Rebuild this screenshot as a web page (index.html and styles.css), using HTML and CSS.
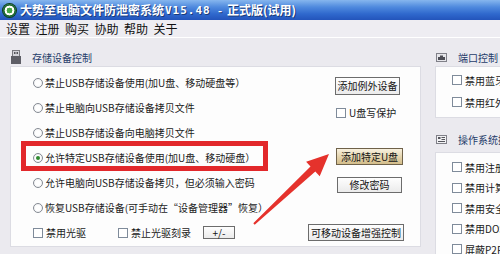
FILE: index.html
```html
<!DOCTYPE html>
<html lang="zh-CN">
<head>
<meta charset="utf-8">
<title>大势至电脑文件防泄密系统</title>
<link rel="stylesheet" href="styles.css">
</head>
<body>
<div class="window">
  <div class="titlebar">
    <span class="app-icon"></span>
    <span class="title"><span class="t-cn t-main">大势至电脑文件防泄密系统</span><span class="ver">V15.48</span><span class="t-dash">-</span><span class="t-cn t-ed">正式版(试用)</span></span>
  </div>
  <div class="menubar">
    <span>设置</span><span>注册</span><span>购买</span><span>协助</span><span>帮助</span><span>关于</span>
  </div>
  <div class="client">
    <section class="group main-group">
      <div class="group-head">
        <svg class="gicon" width="10" height="14" viewBox="0 0 10 14">
          <rect x="1.5" y="0.5" width="7" height="6" fill="#d4d4da" stroke="#7a7a80"/>
          <rect x="3" y="2" width="1.5" height="2" fill="#55555a"/>
          <rect x="5.5" y="2" width="1.5" height="2" fill="#55555a"/>
          <rect x="0" y="6" width="10" height="8" fill="#5e5e66"/>
        </svg>
        <span>存储设备控制</span>
      </div>
      <div class="group-box">
        <div class="opt-grid">
          <div class="radio"><i class="rb"></i>禁止USB存储设备使用(加U盘、移动硬盘等）</div>
          <div class="side"><button class="btn btn-exc">添加例外设备</button></div>

          <div class="radio"><i class="rb"></i>禁止电脑向USB存储设备拷贝文件</div>
          <div class="side"><div class="check wp"><i class="cb"></i>U盘写保护</div></div>

          <div class="radio"><i class="rb"></i>禁止USB存储设备向电脑拷贝文件</div>
          <div class="side"></div>

          <div class="radio"><i class="rb on"></i>允许特定USB存储设备使用(加U盘、移动硬盘）</div>
          <div class="side"><button class="btn btn-hot">添加特定U盘</button></div>

          <div class="radio"><i class="rb"></i>允许电脑向USB存储设备拷贝，但必须输入密码</div>
          <div class="side"><button class="btn btn-pwd">修改密码</button></div>

          <div class="radio"><i class="rb"></i>恢复USB存储设备(可手动在“设备管理器”恢复）</div>
          <div class="side"></div>
        </div>
        <div class="bottom-row">
          <div class="check c1"><i class="cb"></i>禁用光驱</div>
          <div class="check c2"><i class="cb"></i>禁止光驱刻录</div>
          <button class="btn btn-pm">+/-</button>
          <button class="btn btn-enh">可移动设备增强控制</button>
        </div>
      </div>
    </section>

    <aside class="right-col">
      <section class="group">
        <div class="group-head">
          <svg class="gicon" width="11" height="9" viewBox="0 0 11 9">
            <rect x="0.5" y="0.5" width="10" height="8" fill="#e6e6ea" stroke="#808088"/>
            <path d="M2 7 L2 4 L4 4 L4 2.5 L7 2.5 L7 4 L9 4 L9 7 Z" fill="#4d4d55"/>
          </svg>
          <span>端口控制</span>
        </div>
        <div class="group-box side-box port-box">
          <div class="check rrow"><i class="cb"></i>禁用蓝牙</div>
          <div class="check rrow"><i class="cb"></i>禁用红外</div>
        </div>
      </section>
      <section class="group os-group">
        <div class="group-head">
          <svg class="gicon" width="11" height="9" viewBox="0 0 11 9">
            <rect x="0.5" y="0.5" width="10" height="8" fill="#f2f2f4" stroke="#808088"/>
            <rect x="2" y="2" width="2.5" height="2" fill="#55555c"/>
            <rect x="5.5" y="2" width="3.5" height="1" fill="#55555c"/>
            <rect x="5.5" y="4" width="3.5" height="1" fill="#55555c"/>
            <rect x="2" y="6" width="7" height="1" fill="#55555c"/>
          </svg>
          <span>操作系统控制</span>
        </div>
        <div class="group-box side-box os-box">
          <div class="check rrow2"><i class="cb"></i>禁用注册表</div>
          <div class="check rrow2"><i class="cb"></i>禁用计算机</div>
          <div class="check rrow2"><i class="cb"></i>禁用安全模式</div>
          <div class="check rrow2"><i class="cb"></i>禁用DOS</div>
          <div class="check rrow2"><i class="cb"></i>屏蔽P2P</div>
        </div>
      </section>
    </aside>
  </div>

  <div class="annot-box"></div>
  <svg class="annot-arrow" width="500" height="254" viewBox="0 0 500 254">
    <polygon points="253.3,223.3 310.5,166.4 306.1,161.7 329,154 319.7,176.3 315.3,171.6 254.7,224.7" fill="#e5322c"/>
  </svg>
</div>
</body>
</html>
```

FILE: styles.css
```css
* {
  box-sizing: border-box;
  margin: 0;
  padding: 0;
}

html, body {
  width: 500px;
  height: 254px;
  overflow: hidden;
}

body {
  background: #ebeaef;
  font-family: "Noto Sans CJK SC", "Noto Sans", sans-serif;
  font-size: 10px;
  color: #1b1b1b;
}

.window {
  position: relative;
  width: 500px;
  height: 254px;
  overflow: hidden;
  background: #ebeaef;
}

/* title bar */
.titlebar {
  height: 20px;
  display: flex;
  align-items: center;
  padding-left: 3px;
  background: linear-gradient(#86b6ee 0%, #4f8ade 35%, #2f68cd 70%, #2354bb 100%);
  color: #fff;
}

.app-icon {
  flex: 0 0 13px;
  width: 13px;
  height: 13px;
  border-radius: 50%;
  background: radial-gradient(circle, #49a845 0 30%, #ffffff 34% 52%, #1f6b2b 56%);
  box-shadow: 0 0 0 1px #0f3f1b;
}

.title {
  display: flex;
  align-items: center;
  margin-left: 4px;
  height: 20px;
  white-space: nowrap;
  text-shadow: 1px 1px 0 #1b3a78;
}

.t-cn {
  display: block;
  overflow: hidden;
  font-size: 12px;
  line-height: 20px;
  font-weight: bold;
}

.t-main {
  flex: 0 0 145px;
  width: 145px;
}

.t-ed {
  flex: 0 0 70px;
  width: 70px;
}

.ver {
  flex: 0 0 50px;
  font-family: "DejaVu Sans Mono", monospace;
  font-weight: bold;
  font-size: 11px;
  letter-spacing: 1px;
}

.t-dash {
  flex: 0 0 auto;
  margin: 0 5px 0 3px;
  font-size: 11px;
  font-weight: bold;
}

/* menu bar */
.menubar {
  height: 18px;
  display: flex;
  align-items: center;
  gap: 5.5px;
  padding-left: 6px;
  background: #eeedf2;
  border-bottom: 1px solid #ffffff;
  font-size: 12px;
  color: #111;
}

/* client area */
.client {
  display: flex;
  gap: 14px;
  padding: 10px 0 0 10px;
}

.group-head {
  height: 18px;
  display: flex;
  align-items: center;
  gap: 11px;
  padding-left: 1px;
  color: #263c6a;
  font-size: 10px;
  white-space: nowrap;
}

.gicon {
  flex: 0 0 auto;
}

.group-box {
  background: #fdfdfd;
  border: 1px solid #dcdce3;
}

.main-group {
  flex: 0 0 411px;
}

.main-group .group-box {
  height: 181px;
  padding: 3px 15px 0 22px;
}

.opt-grid {
  display: grid;
  grid-template-columns: 1fr 70px;
  grid-auto-rows: 25px;
}

.radio,
.check {
  display: flex;
  align-items: center;
  white-space: nowrap;
}

.rb {
  flex: 0 0 10px;
  width: 10px;
  height: 10px;
  margin-right: 2px;
  border: 1px solid #858a92;
  border-radius: 50%;
  background: radial-gradient(circle, #ffffff 40%, #e6e8ec 100%);
  position: relative;
}

.rb.on::after {
  content: "";
  position: absolute;
  left: 2px;
  top: 2px;
  width: 4px;
  height: 4px;
  border-radius: 50%;
  background: #2f8a2f;
}

.cb {
  flex: 0 0 10px;
  width: 10px;
  height: 10px;
  margin-right: 3px;
  border: 1px solid #7f8b9a;
  background: #ffffff;
}

.side {
  display: flex;
  flex-direction: column;
}

.btn {
  font-family: "Noto Sans CJK SC", "Noto Sans", sans-serif;
  font-size: 10px;
  line-height: 1;
  color: #141414;
  border: 1px solid #6c6c6c;
  background: linear-gradient(#fefefe, #ebebeb);
  padding: 0;
  white-space: nowrap;
}

.btn-exc {
  width: 65px;
  height: 18px;
  margin-top: 7px;
}

.wp {
  margin-top: 10px;
  margin-left: 1px;
}

.btn-hot {
  width: 67px;
  height: 17px;
  margin-top: 3px;
  margin-left: 1px;
  border-color: #6f624a;
  background: linear-gradient(#f8f1df, #e3d3ac 55%, #d3bd8a);
}

.btn-pwd {
  width: 65px;
  height: 16px;
  margin-top: 7px;
  margin-left: 2px;
}

.bottom-row {
  height: 25px;
  display: flex;
  align-items: center;
}

.check.c1,
.check.c2 {
  flex: 0 0 85px;
}

.btn-pm {
  width: 32px;
  height: 13px;
}

.btn-enh {
  width: 96px;
  height: 17px;
  margin-left: auto;
  margin-right: 1px;
}

/* right column */
.right-col {
  flex: 0 0 120px;
}

.side-box {
  padding-left: 16px;
}

.port-box {
  height: 52px;
  padding-top: 2px;
}

.rrow {
  height: 22px;
}

.os-group {
  margin-top: 12px;
}

.os-group .group-head {
  margin-bottom: 4px;
}

.os-box {
  height: 110px;
  padding-top: 4px;
}

.rrow2 {
  height: 20.5px;
}

/* annotations over the screenshot */
.annot-box {
  position: absolute;
  left: 21px;
  top: 141px;
  width: 247px;
  height: 30px;
  border: 5px solid #e2282b;
}

.annot-arrow {
  position: absolute;
  left: 0;
  top: 0;
  pointer-events: none;
}
```
